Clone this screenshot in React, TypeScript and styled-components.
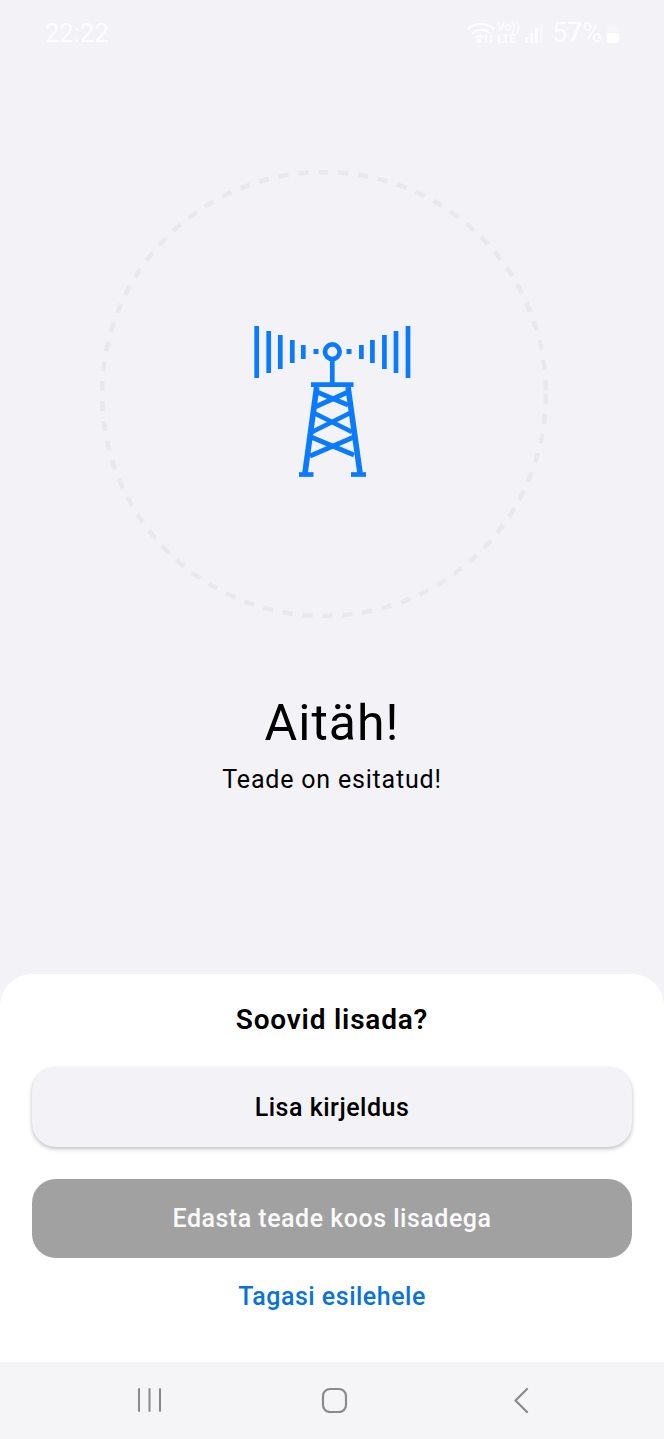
import React from 'react';
import styled, { createGlobalStyle } from 'styled-components';

const GlobalStyle = createGlobalStyle`
    html, body {
        margin: 0;
        padding: 0;
        background: #f2f2f7;
        font-family: Roboto, "Liberation Sans", sans-serif;
    }
`;

const Page = styled.div`
    width: 664px;
    height: 1439px;
    display: flex;
    flex-direction: column;
    background: #f2f2f7;
    overflow: hidden;
`;

const StatusBar = styled.div`
    height: 64px;
    box-sizing: border-box;
    padding: 18px 44px 0 45px;
    display: flex;
    justify-content: space-between;
    align-items: flex-start;
    color: rgba(255, 255, 255, 0.9);
`;

const Clock = styled.div`
    font-size: 25.5px;
    line-height: 30px;
`;

const StatusIcons = styled.div`
    display: flex;
    align-items: center;
    height: 30px;
`;

const NetworkLabel = styled.div`
    width: 24px;
    margin: 0 4px 0 2px;
    font-size: 12px;
    line-height: 12px;
    font-weight: 700;
    text-align: left;
`;

const Battery = styled.div`
    margin: 0 4px 0 9px;
    font-size: 27px;
    line-height: 30px;
`;

const Hero = styled.div`
    flex: 1;
    display: flex;
    flex-direction: column;
    align-items: center;
`;

const Ring = styled.div`
    width: 448px;
    height: 448px;
    margin: 106px 16px 0 0;
    position: relative;
    display: flex;
    align-items: center;
    justify-content: center;
`;

const RingLine = styled.svg`
    position: absolute;
    inset: 0;
`;

const Tower = styled.svg`
    margin: 12px 0 0 16px;
`;

const Title = styled.h1`
    margin: 75px 0 0;
    font-size: 50px;
    line-height: 60px;
    font-weight: 400;
    letter-spacing: 1px;
    color: #000;
`;

const Subtitle = styled.p`
    margin: 11px 0 0;
    font-size: 25px;
    line-height: 32px;
    letter-spacing: 0.8px;
    color: #000;
`;

const Sheet = styled.div`
    height: 388px;
    box-sizing: border-box;
    padding: 28px 32px 0;
    background: #fff;
    border-radius: 32px 32px 0 0;
    display: flex;
    flex-direction: column;
    align-items: stretch;
`;

const SheetTitle = styled.h2`
    margin: 0 0 29px;
    height: 36px;
    font-size: 28px;
    line-height: 36px;
    font-weight: 600;
    letter-spacing: 0.8px;
    text-align: center;
    color: #000;
`;

const ActionButton = styled.button<{ $disabled?: boolean }>`
    height: ${(p) => (p.$disabled ? '79px' : '80px')};
    border: 0;
    border-radius: 24px;
    font-family: inherit;
    font-size: 25px;
    font-weight: 500;
    letter-spacing: 0.5px;
    background: ${(p) => (p.$disabled ? '#a1a1a1' : '#f2f2f7')};
    color: ${(p) => (p.$disabled ? '#fafafa' : '#000')};
    box-shadow: ${(p) => (p.$disabled ? 'none' : '0 2px 4px rgba(0, 0, 0, 0.25)')};
    margin-bottom: 32px;
`;

const BackLink = styled.a`
    margin-top: -11px;
    text-align: center;
    font-size: 25px;
    line-height: 36px;
    font-weight: 500;
    letter-spacing: 0.5px;
    color: #0a73d9;
`;

const NavBar = styled.div`
    height: 77px;
    background: #f5f5f7;
    display: flex;
    align-items: flex-start;
    gap: 160px;
    box-sizing: border-box;
    padding: 25px 0 0 135px;
`;

const braces = [
    'M317 392 L348 405',
    'M348 392 L315 407',
    'M314 413 L352 432',
    'M350 413 L312 432',
    'M311 437 L354 455',
    'M354 437 L310 456',
];

const leftBars = [
    [256.7, 326, 378],
    [268.7, 331, 373],
    [280.3, 335, 369],
    [292.3, 340, 363],
    [303.3, 345, 359],
];

const App: React.FC = () => {
    return (
        <Page>
            <GlobalStyle />
            <StatusBar>
                <Clock>22:22</Clock>
                <StatusIcons>
                    <svg width="28" height="24" viewBox="0 0 28 24" fill="none" stroke="currentColor" strokeWidth="2.2">
                        <path d="M1 8 A19 19 0 0 1 27 8" />
                        <path d="M5 12.5 A13 13 0 0 1 23 12.5" />
                        <path d="M9 16.5 A7 7 0 0 1 17 16.5" />
                        <circle cx="12" cy="20" r="1.2" fill="currentColor" />
                        <path d="M19 14 v8 M24 14 v8" strokeWidth="1.6" />
                    </svg>
                    <NetworkLabel>
                        Vo))
                        <br />
                        LTE
                    </NetworkLabel>
                    <svg width="18" height="24" viewBox="0 0 18 24" fill="currentColor">
                        <rect x="0" y="16" width="3" height="6" />
                        <rect x="5" y="12" width="3" height="10" />
                        <rect x="10" y="7" width="3" height="15" />
                        <rect x="15" y="3" width="3" height="19" opacity="0.5" />
                    </svg>
                    <Battery>57%</Battery>
                    <svg width="14" height="24" viewBox="0 0 14 24" fill="currentColor">
                        <path d="M1 8 a3 3 0 0 1 3 -3 h6 a3 3 0 0 1 3 3 v12 a2 2 0 0 1 -2 2 h-8 a2 2 0 0 1 -2 -2 z" opacity="0.35" />
                        <path d="M1 12 h12 v8 a2 2 0 0 1 -2 2 h-8 a2 2 0 0 1 -2 -2 z" />
                    </svg>
                </StatusIcons>
            </StatusBar>
            <Hero>
                <Ring>
                    <RingLine width="448" height="448" viewBox="0 0 448 448" fill="none">
                        <circle cx="224" cy="224" r="222" stroke="#e8e8ed" strokeWidth="4.5" strokeDasharray="10 10" />
                    </RingLine>
                    <Tower width="185" height="180" viewBox="240 310 185 180">
                        <g stroke="#0a7aff" strokeWidth="4.7" fill="none">
                            {leftBars.map(([x, y1, y2]) => (
                                <line key={x} x1={x} y1={y1} x2={x} y2={y2} />
                            ))}
                            {leftBars.map(([x, y1, y2]) => (
                                <line key={x} x1={664.7 - x} y1={y1} x2={664.7 - x} y2={y2} />
                            ))}
                            <circle cx="332.3" cy="351.7" r="7.3" />
                            <line x1="332.3" y1="359" x2="332.3" y2="383" />
                            <line x1="311" y1="384.7" x2="353.5" y2="384.7" />
                            <line x1="299" y1="474.5" x2="313.5" y2="474.5" />
                            <line x1="351" y1="474.5" x2="366" y2="474.5" />
                            <path d="M316.7 387 L305 473" strokeWidth="5.6" />
                            <path d="M348 387 L360 473" strokeWidth="5.6" />
                            {braces.map((d) => (
                                <path key={d} d={d} />
                            ))}
                        </g>
                        <g fill="#0a7aff">
                            <rect x="313.5" y="349" width="5" height="5" />
                            <rect x="346.5" y="349" width="5" height="5" />
                        </g>
                    </Tower>
                </Ring>
                <Title>Aitäh!</Title>
                <Subtitle>Teade on esitatud!</Subtitle>
            </Hero>
            <Sheet>
                <SheetTitle>Soovid lisada?</SheetTitle>
                <ActionButton>Lisa kirjeldus</ActionButton>
                <ActionButton $disabled>Edasta teade koos lisadega</ActionButton>
                <BackLink>Tagasi esilehele</BackLink>
            </Sheet>
            <NavBar>
                <svg width="26" height="26" viewBox="0 0 26 26" stroke="#8a8a8c" strokeWidth="2" strokeLinecap="round">
                    <line x1="4" y1="2" x2="4" y2="24" />
                    <line x1="14.5" y1="2" x2="14.5" y2="24" />
                    <line x1="25" y1="2" x2="25" y2="24" />
                </svg>
                <svg width="30" height="26" viewBox="0 0 30 26" fill="none" stroke="#8a8a8c" strokeWidth="2.2">
                    <rect x="2" y="2" width="23" height="23" rx="7" />
                </svg>
                <svg width="20" height="26" viewBox="0 0 20 26" fill="none" stroke="#8a8a8c" strokeWidth="2.2" strokeLinecap="round" strokeLinejoin="round">
                    <path d="M16 2 L4.5 13.5 L16 25" />
                </svg>
            </NavBar>
        </Page>
    );
};

export default App;
